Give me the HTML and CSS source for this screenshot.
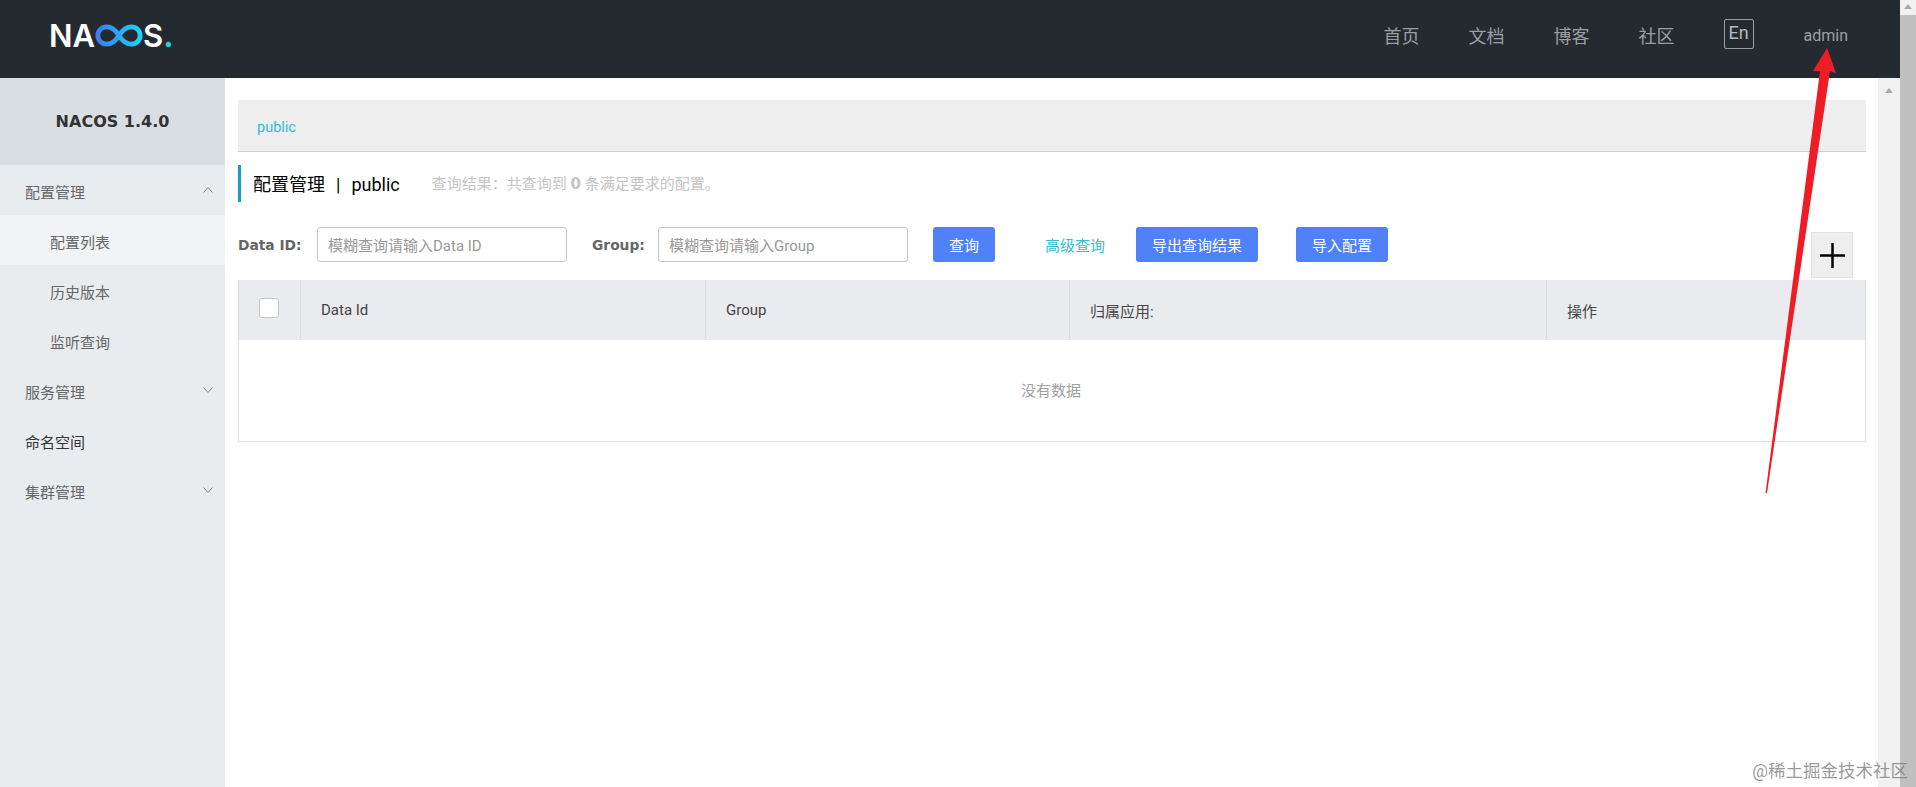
FILE: index.html
```html
<!DOCTYPE html>
<html lang="zh">

<head>
    <meta charset="UTF-8">
    <title>Nacos</title>
    <link rel="stylesheet" href="styles.css">
</head>

<body>
    <div class="app">
        <header class="topbar">
            <div class="logo">
                <span class="logo-text">NA</span>
                <svg class="logo-loop" viewBox="0 0 52 23" width="50" height="23">
                    <defs>
                        <linearGradient id="loopGrad" x1="0" x2="1" y1="0" y2="0">
                            <stop offset="0" stop-color="#3d7ef2" />
                            <stop offset="1" stop-color="#20d0f2" />
                        </linearGradient>
                    </defs>
                    <path d="M26 11.5C22 5 18 2.5 13 2.5a9 9 0 0 0 0 18C18 20.5 22 18 26 11.5C30 5 34 2.5 39 2.5a9 9 0 0 1 0 18C34 20.5 30 18 26 11.5Z" fill="none" stroke="url(#loopGrad)" stroke-width="5" />
                </svg>
                <span class="logo-text">S</span>
                <span class="logo-dot">.</span>
            </div>
            <nav class="topnav">
                <a class="topnav-link">首页</a>
                <a class="topnav-link">文档</a>
                <a class="topnav-link">博客</a>
                <a class="topnav-link">社区</a>
                <a class="lang-btn">En</a>
                <a class="user-name">admin</a>
            </nav>
        </header>

        <div class="layout">
            <aside class="sidebar">
                <div class="side-title">NACOS 1.4.0</div>
                <ul class="side-menu">
                    <li class="side-item">配置管理
                        <svg class="chevron" viewBox="0 0 10 6" width="10" height="6"><path d="M.5 5.5 5 .5l4.5 5" /></svg>
                    </li>
                    <li class="side-item sub active">配置列表</li>
                    <li class="side-item sub">历史版本</li>
                    <li class="side-item sub">监听查询</li>
                    <li class="side-item">服务管理
                        <svg class="chevron" viewBox="0 0 10 6" width="10" height="6"><path d="M.5.5 5 5.5 9.5.5" /></svg>
                    </li>
                    <li class="side-item dark">命名空间</li>
                    <li class="side-item">集群管理
                        <svg class="chevron" viewBox="0 0 10 6" width="10" height="6"><path d="M.5.5 5 5.5 9.5.5" /></svg>
                    </li>
                </ul>
            </aside>

            <main class="content">
                <div class="ns-bar"><a class="ns-link">public</a></div>

                <div class="page-title">
                    <span class="page-name">配置管理<span class="page-sep">|</span>public</span>
                    <span class="page-result">查询结果：共查询到 <b>0</b> 条满足要求的配置。</span>
                </div>

                <div class="search-form">
                    <label class="form-label label-id">Data ID:</label>
                    <input class="form-input" placeholder="模糊查询请输入Data ID">
                    <label class="form-label label-group">Group:</label>
                    <input class="form-input" placeholder="模糊查询请输入Group">
                    <button class="btn btn-query">查询</button>
                    <a class="adv-link">高级查询</a>
                    <button class="btn btn-export">导出查询结果</button>
                    <button class="btn btn-import">导入配置</button>
                </div>

                <button class="add-btn">
                    <svg viewBox="0 0 25 25" width="25" height="25"><path d="M0 12.5h25M12.5 0v25" /></svg>
                </button>

                <table class="data-table">
                    <colgroup>
                        <col class="col-check">
                        <col class="col-id">
                        <col class="col-group">
                        <col class="col-app">
                        <col>
                    </colgroup>
                    <thead>
                        <tr>
                            <th class="check-cell"><span class="checkbox"></span></th>
                            <th>Data Id</th>
                            <th>Group</th>
                            <th>归属应用:</th>
                            <th>操作</th>
                        </tr>
                    </thead>
                    <tbody>
                        <tr>
                            <td class="empty" colspan="5">没有数据</td>
                        </tr>
                    </tbody>
                </table>
            </main>

            <div class="inner-scroll"><span class="scroll-up"></span></div>
        </div>
    </div>

    <div class="outer-scroll"><div class="outer-cap"><span class="scroll-up"></span></div></div>

    <svg class="annotation" viewBox="0 0 1916 787" width="1916" height="787">
        <polygon points="1827,48 1836,73 1830,71 1767,493 1765.5,493 1820,71 1813,71" fill="#ee1c25" />
    </svg>

    <div class="watermark">@稀土掘金技术社区</div>
</body>

</html>
```

FILE: styles.css
```css
* {
    padding: 0;
    margin: 0;
    box-sizing: border-box;
}

html,
body {
    height: 100%;
    overflow: hidden;
}

body {
    display: flex;
    font-family: "Roboto", "Noto Sans CJK SC", sans-serif;
    font-size: 14px;
    color: #333;
    background: #fff;
}

ul {
    list-style: none;
}

.app {
    flex: 1;
    min-width: 0;
    display: flex;
    flex-direction: column;
}

/* top bar */
.topbar {
    height: 78px;
    flex: none;
    padding-bottom: 8px;
    background: #252a30;
    display: flex;
    justify-content: space-between;
    align-items: center;
}

.logo {
    display: flex;
    align-items: center;
    margin-left: 49px;
    height: 23px;
}

.logo-text {
    font-family: "Inter", sans-serif;
    font-size: 31px;
    font-weight: 600;
    line-height: 23px;
    color: #fff;
}

.logo-loop {
    flex: none;
    margin: 0 -1px;
}

.logo-dot {
    font-family: "Inter", sans-serif;
    font-size: 31px;
    font-weight: 700;
    line-height: 23px;
    color: #20cfe6;
}

.topnav {
    display: flex;
    align-items: center;
    margin-right: 52px;
}

.topnav-link {
    width: 85px;
    font-size: 18px;
    color: #9a9fa4;
}

.lang-btn {
    width: 30px;
    height: 30px;
    margin-right: 50px;
    margin-top: -2px;
    border: 1px solid #9a9fa4;
    border-radius: 2px;
    font-size: 18px;
    line-height: 26px;
    text-align: center;
    color: #b4b8bc;
}

.user-name {
    font-size: 16px;
    color: #9a9fa4;
}

/* body */
.layout {
    flex: 1;
    min-height: 0;
    display: flex;
}

.sidebar {
    width: 225px;
    flex: none;
    background: #e9ecef;
}

.side-title {
    height: 87px;
    background: #d9dee2;
    font-family: "DejaVu Sans", sans-serif;
    font-size: 16px;
    font-weight: bold;
    line-height: 87px;
    text-align: center;
    color: #333;
}

.side-item {
    height: 50px;
    padding: 3px 12px 0 25px;
    display: flex;
    justify-content: space-between;
    align-items: center;
    font-size: 15px;
    color: #666;
}

.side-item.sub {
    padding-left: 50px;
}

.side-item.active {
    background: #f1f3f5;
}

.side-item.dark {
    color: #333;
}

.chevron {
    fill: none;
    stroke: #888;
    stroke-width: 1;
    margin-top: -3px;
}

.content {
    flex: 1;
    min-width: 0;
    position: relative;
    padding: 22px 12px 0 13px;
}

.ns-bar {
    height: 52px;
    padding: 19px 19px 0;
    background: #eee;
    border-bottom: 1px solid #ccc;
}

.ns-link {
    font-size: 14.5px;
    color: #2cbcd8;
}

.page-title {
    height: 37px;
    margin-top: 13px;
    padding-left: 12px;
    padding-bottom: 2px;
    border-left: 3px solid #1a9cc8;
    display: flex;
    align-items: center;
}

.page-name {
    font-size: 18px;
    color: #000;
}

.page-sep {
    margin: 0 11px;
}

.page-result {
    margin-left: 32px;
    font-size: 15px;
    color: #c4c4c4;
}

.page-result b {
    font-family: "DejaVu Sans", sans-serif;
}

.search-form {
    display: flex;
    align-items: center;
    height: 35px;
    margin-top: 25px;
}

.form-label {
    font-family: "DejaVu Sans", sans-serif;
    font-size: 13.8px;
    font-weight: bold;
    color: #666;
}

.label-id {
    width: 79px;
}

.label-group {
    width: 66px;
    margin-left: 25px;
}

.form-input {
    width: 250px;
    height: 35px;
    padding: 2px 10px 0;
    border: 1px solid #c4c6cf;
    border-radius: 3px;
    outline: none;
    font-family: inherit;
    font-size: 15px;
    color: #333;
}

.form-input::placeholder {
    color: #999;
}

.btn {
    height: 35px;
    border: none;
    border-radius: 3px;
    background: #5181f8;
    color: #fff;
    font-family: inherit;
    font-size: 15px;
}

.btn-query {
    width: 62px;
    margin-left: 25px;
}

.adv-link {
    width: 60px;
    margin-left: 50px;
    font-size: 15px;
    color: #33bfd2;
}

.btn-export {
    width: 122px;
    margin-left: 31px;
}

.btn-import {
    width: 92px;
    margin-left: 38px;
}

.add-btn {
    position: absolute;
    top: 154px;
    right: 25px;
    width: 42px;
    height: 46px;
    background: #eee;
    border: 1px solid #e2e2e2;
    display: flex;
    align-items: center;
    justify-content: center;
}

.add-btn svg {
    stroke: #000;
    stroke-width: 2.5;
}

.data-table {
    width: 100%;
    margin-top: 18px;
    border-collapse: collapse;
    table-layout: fixed;
    border-left: 1px solid #ddd;
    border-right: 1px solid #ddd;
    border-bottom: 1px solid #ddd;
}

.col-check {
    width: 62px;
}

.col-id {
    width: 405px;
}

.col-group {
    width: 364px;
}

.col-app {
    width: 477px;
}

.data-table th {
    height: 60px;
    padding-left: 20px;
    background: #e9ebee;
    border-right: 1px solid #dcdee3;
    font-size: 15px;
    font-weight: normal;
    text-align: left;
    color: #444;
}

.data-table th:last-child {
    border-right: none;
}

.data-table th.check-cell {
    padding-left: 20px;
}

.checkbox {
    display: block;
    width: 20px;
    height: 20px;
    margin-top: -4px;
    background: #fff;
    border: 1px solid #c4c6cf;
    border-radius: 3px;
}

.empty {
    height: 101px;
    padding-right: 2px;
    padding-bottom: 2px;
    text-align: center;
    font-size: 15px;
    color: #a0a0a0;
}

/* scrollbars */
.inner-scroll {
    width: 22px;
    flex: none;
    background: #f1f1f1;
    display: flex;
    justify-content: center;
    padding-top: 10px;
}

.outer-scroll {
    width: 16px;
    flex: none;
    background: #c0c0c0;
}

.outer-cap {
    height: 15px;
    background: #f1f1f1;
    display: flex;
    justify-content: center;
    padding-top: 4px;
}

.scroll-up {
    display: block;
    width: 0;
    height: 0;
    border-left: 4px solid transparent;
    border-right: 4px solid transparent;
    border-bottom: 5px solid #a9a9a9;
}

/* screenshot overlays */
.annotation {
    position: absolute;
    top: 0;
    left: 0;
    pointer-events: none;
}

.watermark {
    position: absolute;
    right: 8px;
    bottom: 5px;
    font-size: 17.5px;
    color: rgba(120, 120, 120, .75);
}
```
